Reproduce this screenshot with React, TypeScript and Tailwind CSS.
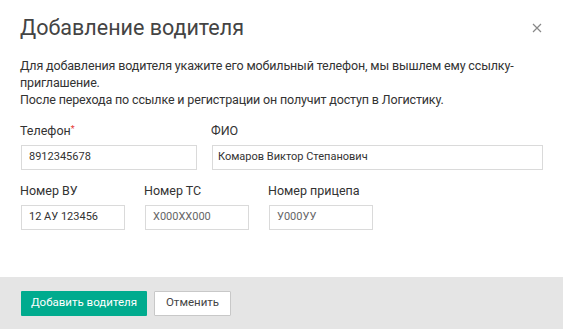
export default function App() {
  const font = { fontFamily: 'Roboto, "Liberation Sans", sans-serif' }

  return (
    <div className="w-[563px] h-[329px] bg-white flex flex-col text-[#333]" style={font}>
      <div className="flex items-center justify-between pl-5 pr-[21px] pt-[14px]">
        <h1 className="text-[21.5px] leading-[28px] text-[#444]">Добавление водителя</h1>
        <button className="text-[#888] w-[10px] h-[10px] flex items-center justify-center">
          <svg width="10" height="10" viewBox="0 0 10 10" stroke="currentColor" strokeWidth="1.2">
            <path d="M1 1L9 9M9 1L1 9" />
          </svg>
        </button>
      </div>

      <div className="px-5 mt-[15px] text-[12.5px] leading-[17px] tracking-[-0.15px]">
        <p>Для добавления водителя укажите его мобильный телефон, мы вышлем ему ссылку-приглашение.</p>
        <p>После перехода по ссылке и регистрации он получит доступ в Логистику.</p>
      </div>

      <div className="pl-[21px] mt-[14px] flex gap-[15px]">
        <Field label="Телефон" required value="8912345678" width="w-[176px]" pad="pl-[7px]" />
        <Field label="ФИО" value="Комаров Виктор Степанович" width="w-[331px]" pad="pl-[5px]" />
      </div>

      <div className="pl-[21px] mt-[12px] flex gap-[20px]">
        <Field label="Номер ВУ" value="12 АУ 123456" width="w-[104px]" pad="pl-[7px]" />
        <Field label="Номер ТС" value="Х000ХХ000" width="w-[104px]" pad="pl-[7px]" muted />
        <Field label="Номер прицепа" value="У000УУ" width="w-[104px]" pad="pl-[7px]" muted />
      </div>

      <div className="mt-auto h-[52px] bg-[#e5e5e5] pl-[21px] flex items-center gap-[7px]">
        <button className="h-[25px] w-[126px] bg-[#00ab8e] text-white text-[11.5px] rounded-[1px]">
          Добавить водителя
        </button>
        <button className="h-[25px] w-[77px] bg-white border border-[#c8c8c8] text-[#444] text-[11.5px] rounded-[1px]">
          Отменить
        </button>
      </div>
    </div>
  )
}

function Field({
  label,
  value,
  width,
  pad,
  required,
  muted,
}: {
  label: string
  value: string
  width: string
  pad: string
  required?: boolean
  muted?: boolean
}) {
  return (
    <div className="flex flex-col">
      <label className="text-[12.5px] leading-[17px] mb-[6px] -ml-px">
        {label}
        {required && <span className="text-[#e53935] text-[9px] align-top relative -top-[1px]">*</span>}
      </label>
      <div
        className={`${width} ${pad} h-[25px] border border-[#dadada] flex items-center text-[11px] ${
          muted ? 'text-[#666]' : 'text-[#333]'
        }`}
      >
        {value}
      </div>
    </div>
  )
}
